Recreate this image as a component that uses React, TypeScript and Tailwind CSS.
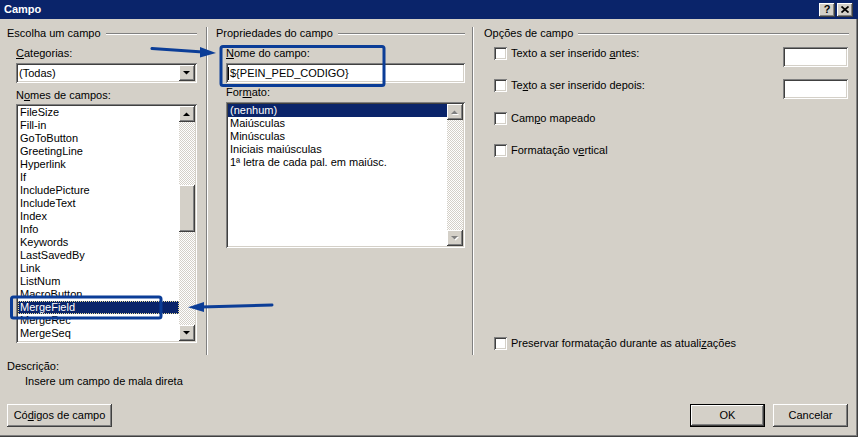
import React from 'react';

const sunken = 'shadow-[inset_1px_1px_0_#808080,inset_-1px_-1px_0_#ffffff,inset_2px_2px_0_#404040,inset_-2px_-2px_0_#d4d0c8]';
const raised = 'shadow-[inset_-1px_-1px_0_#404040,inset_1px_1px_0_#ffffff,inset_-2px_-2px_0_#808080,inset_2px_2px_0_#d4d0c8]';
const checker = 'bg-[image:repeating-conic-gradient(#d4d0c8_0_25%,#ffffff_0_50%)] bg-[length:2px_2px]';

const fields = [
  'FileSize', 'Fill-in', 'GoToButton', 'GreetingLine', 'Hyperlink', 'If', 'IncludePicture', 'IncludeText', 'Index',
  'Info', 'Keywords', 'LastSavedBy', 'Link', 'ListNum', 'MacroButton', 'MergeField', 'MergeRec', 'MergeSeq',
];
const formats = ['(nenhum)', 'Maiúsculas', 'Minúsculas', 'Iniciais maiúsculas', '1ª letra de cada pal. em maiúsc.'];

function Tri({ dir, disabled }: { dir: 'up' | 'down'; disabled?: boolean }) {
  const pts = dir === 'up' ? '0,4 7,4 3.5,0.5' : '0,0 7,0 3.5,3.5';
  return (
    <svg width="8" height="5" viewBox="0 0 8 5">
      {disabled && <polygon points={pts} fill="#ffffff" transform="translate(1,1)" />}
      <polygon points={pts} fill={disabled ? '#808080' : '#000000'} />
    </svg>
  );
}

function ScrollBtn({ dir, disabled, h = 'h-[16px]' }: { dir: 'up' | 'down'; disabled?: boolean; h?: string }) {
  return (
    <div className={`w-[16px] ${h} shrink-0 bg-[#d4d0c8] ${raised} flex items-center justify-center`}>
      <Tri dir={dir} disabled={disabled} />
    </div>
  );
}

function Check() {
  return <div className={`w-[13px] h-[13px] shrink-0 bg-white ${sunken}`} />;
}

function GroupHead({ title }: { title: string }) {
  return (
    <div className="flex items-center h-[13px]">
      <span className="leading-[13px] whitespace-nowrap">{title}</span>
      <div className="flex-1 ml-[5px] h-[2px] border-t border-t-[#808080] border-b border-b-white" />
    </div>
  );
}

function Btn({ children, w, isDefault }: { children: React.ReactNode; w: string; isDefault?: boolean }) {
  return (
    <div className={`${w} h-[23px] ${isDefault ? 'border border-black' : ''}`}>
      <div className={`w-full h-full bg-[#d4d0c8] ${raised} flex items-center justify-center leading-[13px]`}>{children}</div>
    </div>
  );
}

export default function App() {
  return (
    <div className={`relative w-[858px] h-[437px] overflow-hidden bg-[#d4d0c8] text-black text-[11px] font-['Liberation_Sans',Arial,sans-serif] flex flex-col shadow-[inset_-1px_-1px_0_#404040,inset_-2px_-2px_0_#808080]`}>
      {/* title bar */}
      <div className="h-[19px] shrink-0 bg-[#0a246a] flex items-center pl-[4px] pr-[5px]">
        <span className="font-bold text-white leading-[13px]">Campo</span>
        <div className="ml-auto flex gap-[2px]">
          <div className={`w-[16px] h-[14px] bg-[#d4d0c8] ${raised} flex items-center justify-center font-bold leading-[11px] text-[11px]`}>?</div>
          <div className={`w-[16px] h-[14px] bg-[#d4d0c8] ${raised} flex items-center justify-center`}>
            <svg width="8" height="7" viewBox="0 0 8 7">
              <path d="M0.5 0.5 L7.5 6.5 M7.5 0.5 L0.5 6.5" stroke="#000" strokeWidth="1.7" />
            </svg>
          </div>
        </div>
      </div>

      {/* groups */}
      <div className="flex mt-[8px] h-[328px] shrink-0">
        {/* left */}
        <div className="w-[190px] ml-[7px] flex flex-col">
          <GroupHead title="Escolha um campo" />
          <div className="ml-[9px] mt-[7px] leading-[13px]"><span className="underline">C</span>ategorias:</div>
          <div className={`ml-[9px] mt-[3px] w-[181px] h-[20px] bg-white ${sunken} flex items-center pl-[3px] pr-[2px]`}>
            <span className="leading-[13px]">(Todas)</span>
            <div className="ml-auto"><ScrollBtn dir="down" h="h-[16px]" /></div>
          </div>
          <div className="ml-[9px] mt-[6px] leading-[13px]">N<span className="underline">o</span>mes de campos:</div>
          <div className={`ml-[9px] mt-[2px] w-[181px] h-[239px] bg-white ${sunken} p-[2px] flex`}>
            <div className="flex-1 flex flex-col overflow-hidden">
              {fields.map((f) => (
                <div
                  key={f}
                  className={`h-[13px] shrink-0 leading-[13px] pl-[2px] whitespace-nowrap ${f === 'MergeField' ? 'bg-[#0a246a] text-white outline-1 outline-dotted outline-[#e8dc9c] -outline-offset-1' : ''}`}
                >
                  {f}
                </div>
              ))}
            </div>
            <div className="w-[16px] flex flex-col">
              <ScrollBtn dir="up" />
              <div className={`h-[63px] ${checker}`} />
              <div className={`h-[47px] bg-[#d4d0c8] ${raised}`} />
              <div className={`flex-1 ${checker}`} />
              <ScrollBtn dir="down" />
            </div>
          </div>
        </div>

        <div className="ml-[9px] w-[2px] h-full border-l border-l-[#808080] border-r border-r-white" />

        {/* middle */}
        <div className="w-[249px] ml-[8px] flex flex-col">
          <GroupHead title="Propriedades do campo" />
          <div className="ml-[10px] mt-[7px] leading-[13px]"><span className="underline">N</span>ome do campo:</div>
          <div className={`ml-[10px] mt-[3px] w-[239px] h-[20px] bg-white ${sunken} flex items-center pl-[2px]`}>
            <div className="w-px h-[13px] bg-black" />
            <span className="leading-[13px] ml-px">{'${PEIN_PED_CODIGO}'}</span>
          </div>
          <div className="ml-[10px] mt-[3px] leading-[13px]">For<span className="underline">m</span>ato:</div>
          <div className={`ml-[10px] mt-[3px] w-[239px] h-[146px] bg-white ${sunken} p-[2px] flex`}>
            <div className="flex-1 flex flex-col">
              {formats.map((f, i) => (
                <div key={f} className={`h-[13px] leading-[13px] pl-[2px] whitespace-nowrap ${i === 0 ? 'bg-[#0a246a] text-white' : ''}`}>{f}</div>
              ))}
            </div>
            <div className="w-[16px] flex flex-col">
              <ScrollBtn dir="up" disabled />
              <div className={`flex-1 ${checker}`} />
              <ScrollBtn dir="down" disabled />
            </div>
          </div>
        </div>

        <div className="ml-[7px] w-[2px] h-full border-l border-l-[#808080] border-r border-r-white" />

        {/* right */}
        <div className="w-[365px] ml-[10px] flex flex-col">
          <GroupHead title="Opções de campo" />
          <div className="mt-[7px] flex flex-col pl-[10px] pr-[1px]">
            <div className="h-[32px] flex items-start">
              <Check />
              <span className="ml-[4px] leading-[13px]">Texto a ser inserido <span className="underline">a</span>ntes:</span>
              <div className={`ml-auto w-[65px] h-[20px] bg-white ${sunken}`} />
            </div>
            <div className="h-[33px] flex items-start">
              <Check />
              <span className="ml-[4px] leading-[13px]">Te<span className="underline">x</span>to a ser inserido depois:</span>
              <div className={`ml-auto w-[65px] h-[20px] bg-white ${sunken}`} />
            </div>
            <div className="h-[32px] flex items-start">
              <Check />
              <span className="ml-[4px] leading-[13px]">Cam<span className="underline">p</span>o mapeado</span>
            </div>
            <div className="h-[32px] flex items-start">
              <Check />
              <span className="ml-[4px] leading-[13px]">Formatação v<span className="underline">e</span>rtical</span>
            </div>
          </div>
          <div className="mt-auto mb-[5px] pl-[10px] flex items-start">
            <Check />
            <span className="ml-[4px] leading-[13px]">Preservar formatação durante as atuali<span className="underline">z</span>ações</span>
          </div>
        </div>
      </div>

      {/* description */}
      <div className="ml-[7px] mt-[5px] leading-[13px]">Descrição:</div>
      <div className="ml-[25px] mt-[2px] leading-[13px]">Insere um campo de mala direta</div>

      {/* buttons */}
      <div className="mt-[16px] flex items-center pl-[7px] pr-[10px]">
        <Btn w="w-[105px]">Có<span className="underline">d</span>igos de campo</Btn>
        <div className="ml-auto flex gap-[8px]">
          <Btn w="w-[75px]" isDefault>OK</Btn>
          <Btn w="w-[75px]">Cancelar</Btn>
        </div>
      </div>

      {/* annotations drawn over the dialog */}
      <svg className="absolute inset-0 pointer-events-none" width="858" height="437" viewBox="0 0 858 437">
        <rect x="221" y="46.5" width="163" height="39" rx="2" fill="none" stroke="#0b3d97" strokeWidth="3" />
        <line x1="152" y1="48.5" x2="203" y2="52" stroke="#0b3d97" strokeWidth="3" strokeLinecap="round" />
        <polygon points="200,47 216,53 200,57.5" fill="#0b3d97" />
        <rect x="11.5" y="297" width="149.5" height="21" rx="2" fill="none" stroke="#0b3d97" strokeWidth="3" />
        <line x1="272" y1="305" x2="201" y2="307" stroke="#0b3d97" strokeWidth="3" strokeLinecap="round" />
        <polygon points="204,302 188,307.2 204,312" fill="#0b3d97" />
      </svg>
    </div>
  );
}
